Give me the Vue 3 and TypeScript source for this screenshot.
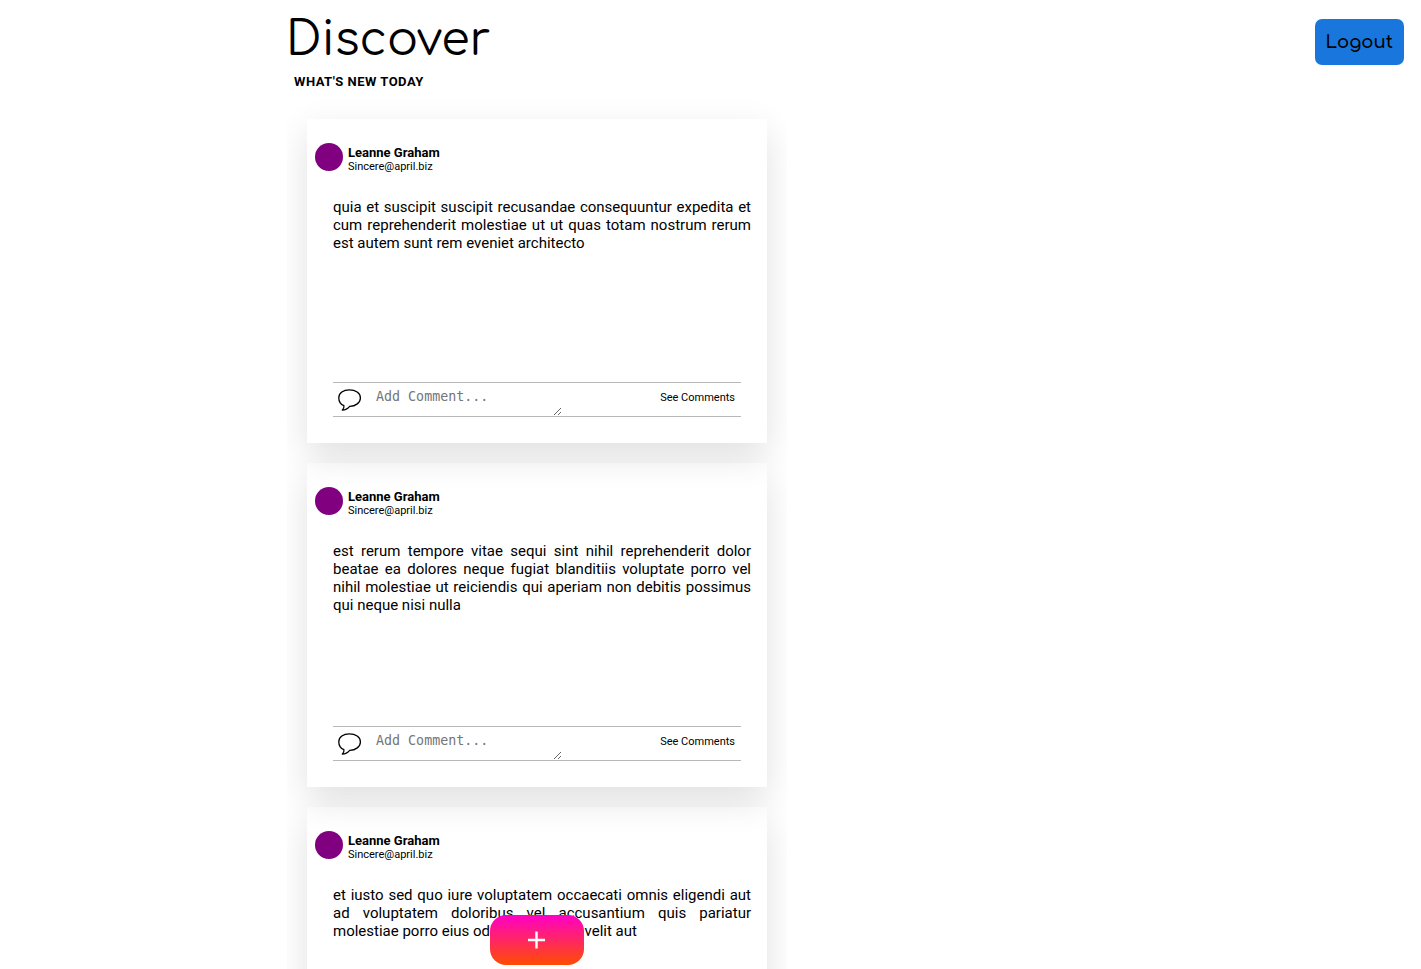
<script setup lang="ts">
import { ref } from 'vue'

interface Post {
  id: number
  name: string
  email: string
  body: string
}

const author = { name: 'Leanne Graham', email: 'Sincere@april.biz' }

const posts = ref<Post[]>([
  {
    id: 1,
    ...author,
    body: 'quia et suscipit suscipit recusandae consequuntur expedita et cum reprehenderit molestiae ut ut quas totam nostrum rerum est autem sunt rem eveniet architecto',
  },
  {
    id: 2,
    ...author,
    body: 'est rerum tempore vitae sequi sint nihil reprehenderit dolor beatae ea dolores neque fugiat blanditiis voluptate porro vel nihil molestiae ut reiciendis qui aperiam non debitis possimus qui neque nisi nulla',
  },
  {
    id: 3,
    ...author,
    body: 'et iusto sed quo iure voluptatem occaecati omnis eligendi aut ad voluptatem doloribus vel accusantium quis pariatur molestiae porro eius odio et labore et velit aut',
  },
])
</script>

<template>
  <div class="page">
    <header class="top">
      <div class="heading">
        <h1>Discover</h1>
        <h2>WHAT'S NEW TODAY</h2>
      </div>
      <button type="button" class="logout">Logout</button>
    </header>

    <main class="feed">
      <article v-for="post in posts" :key="post.id" class="card">
        <div class="author">
          <span class="avatar"></span>
          <div>
            <h3>{{ post.name }}</h3>
            <p class="email">{{ post.email }}</p>
          </div>
        </div>
        <p class="body">{{ post.body }}</p>
        <div class="comment-bar">
          <svg class="bubble" viewBox="0 0 24 24" aria-hidden="true">
            <path
              d="M5.9 17.6C2.5 16.2 0.8 13.2 0.8 9.9C0.8 5.1 5.3 1.8 11.4 1.8S22.4 5.1 22.4 9.9S17.7 18.2 11.7 18.3C10.1 20.2 7.9 21.9 4.3 22C5.7 20.8 6.2 19.3 5.9 17.6Z"
              fill="none"
              stroke="currentColor"
              stroke-width="1.3"
              stroke-linejoin="round"
            />
          </svg>
          <textarea :aria-label="`Comment on post ${post.id}`" placeholder="Add Comment..."></textarea>
          <button type="button" class="see">See Comments</button>
        </div>
      </article>
    </main>

    <div class="dock">
      <button type="button" class="add" aria-label="Add post">
        <svg viewBox="0 0 18 18" aria-hidden="true">
          <path d="M8.5 0.5V17.5M0 9H17" stroke="currentColor" stroke-width="2.4" />
        </svg>
      </button>
    </div>
  </div>
</template>

<style>
body {
  margin: 0;
  background: #fff;
}
</style>

<style scoped>
.page {
  --column-width: 500px;
  --column-left: 287px;
  font-family: Roboto, sans-serif;
  color: #000;
}

h1,
h2,
h3,
p {
  margin: 0;
}

.top {
  display: flex;
  justify-content: space-between;
  align-items: flex-start;
  box-sizing: border-box;
  height: 99px;
  padding: 0 17px 0 var(--column-left);
}

h1 {
  padding-top: 10px;
  margin-left: -1px;
  font: 400 46px/60px Comfortaa, Lato, sans-serif;
}

h2 {
  padding: 4px 0 0 7px;
  font-size: 13px;
  line-height: 16px;
  font-weight: 700;
  letter-spacing: 0.5px;
}

.logout {
  margin-top: 19px;
  padding: 0 11px;
  height: 46px;
  border: 0;
  border-radius: 7px;
  background: #1976dc;
  color: #000;
  font: 600 18px/24px Comfortaa, Lato, sans-serif;
}

.feed {
  display: flex;
  flex-direction: column;
  gap: 20px;
  box-sizing: border-box;
  width: var(--column-width);
  max-width: 100%;
  margin-left: var(--column-left);
  padding: 20px;
  overflow: hidden;
}

.card {
  display: flex;
  flex-direction: column;
  box-sizing: border-box;
  min-height: 324px;
  padding: 24px 26px 26px;
  box-shadow: 0 13px 34px rgba(0, 0, 0, 0.12);
}

.author {
  display: flex;
  gap: 5px;
  margin-left: -18px;
}

.avatar {
  width: 28px;
  height: 28px;
  border-radius: 50%;
  background: purple;
}

h3 {
  padding-top: 2px;
  font-size: 13px;
  line-height: 15px;
  font-weight: 700;
}

.email {
  font-size: 11px;
  line-height: 13px;
}

.body {
  margin: 25px -10px 0 0;
  font-size: 15px;
  line-height: 18px;
  text-align: justify;
}

.comment-bar {
  display: flex;
  align-items: flex-start;
  box-sizing: border-box;
  height: 35px;
  margin-top: auto;
  border-top: 1px solid #b8b8b8;
  border-bottom: 1px solid #b8b8b8;
}

.bubble {
  width: 24px;
  height: 24px;
  margin: 5px 0 0 5px;
}

textarea {
  box-sizing: border-box;
  width: 189px;
  height: 33px;
  margin: 0 0 0 11px;
  padding: 6px 3px;
  border: 0;
  outline: 0;
  background: transparent;
  overflow: hidden;
  font-family: "DejaVu Sans Mono", monospace;
}

textarea::placeholder {
  color: #757575;
}

.see {
  margin: 7px 6px 0 auto;
  padding: 0;
  border: 0;
  background: none;
  color: #000;
  font: 11px/15px Roboto, sans-serif;
}

.dock {
  position: fixed;
  bottom: 4px;
  left: var(--column-left);
  display: flex;
  justify-content: center;
  width: var(--column-width);
  pointer-events: none;
}

.add {
  display: flex;
  align-items: center;
  justify-content: center;
  width: 94px;
  height: 50px;
  padding: 0;
  border: 0;
  border-radius: 16px;
  background: linear-gradient(#ff00c8, #ff4d00);
  color: #fff;
  pointer-events: auto;
}

.add svg {
  width: 18px;
  height: 18px;
}
</style>
